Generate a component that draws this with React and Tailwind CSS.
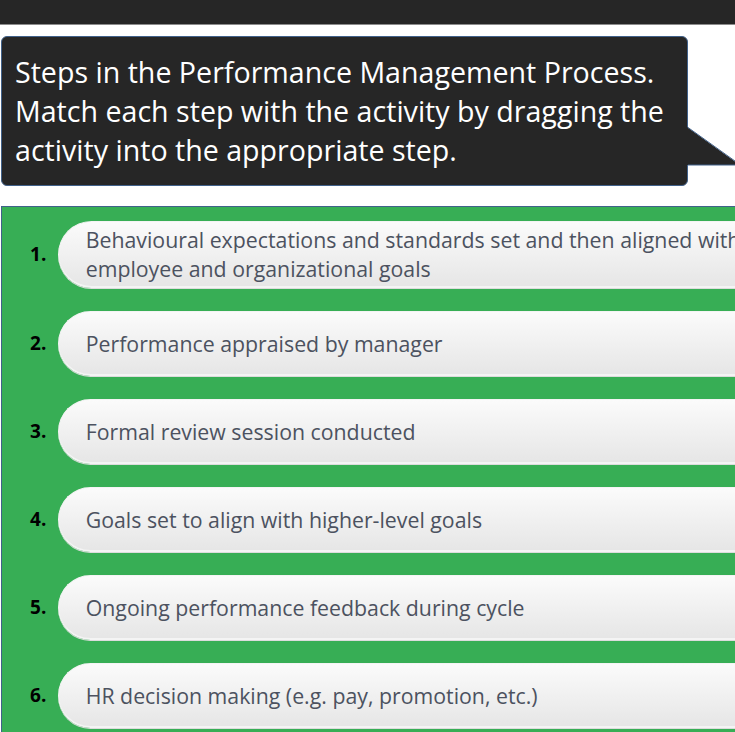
const steps = [
  "Behavioural expectations and standards set and then aligned with employee and organizational goals",
  "Performance appraised by manager",
  "Formal review session conducted",
  "Goals set to align with higher-level goals",
  "Ongoing performance feedback during cycle",
  "HR decision making (e.g. pay, promotion, etc.)",
];

export default function App() {
  return (
    <div className="w-[735px] h-[732px] overflow-hidden bg-white font-['Open_Sans',sans-serif]">
      <div className="h-[25px] bg-[#262626] border-b border-[#8c8c8c]" />

      {/* instructions callout */}
      <div className="pt-[11px] pl-[1px]">
        <div className="relative w-[687px] h-[150px] rounded-md bg-[#262626] border border-[#41618a] px-[13px] pt-[15px] text-white text-[28.6px] leading-[39px]">
          Steps in the Performance Management Process. Match each step with the activity by dragging the activity into the appropriate step.
          <svg className="absolute left-[685px] top-[90px]" width="50" height="40" viewBox="0 0 50 40">
            <polygon points="0,0 50,36 50,38 0,38" fill="#262626" />
            <line x1="1" y1="0.5" x2="50" y2="35.5" stroke="#41618a" strokeWidth="1" />
            <line x1="1" y1="38" x2="50" y2="38" stroke="#41618a" strokeWidth="1" />
          </svg>
        </div>
      </div>

      {/* drop zones */}
      <div className="mt-[20px] ml-[1px] w-[760px] bg-[#37ae55] border-t border-l border-[#41618a] pt-[14px] pb-[20px] flex flex-col gap-[23px]">
        {steps.map((text, i) => (
          <div key={i} className="flex items-center">
            <div className="w-[56px] pl-[28px] text-[19px] font-bold text-black">{i + 1}.</div>
            <div className="w-[710px] min-h-[65px] flex items-center rounded-l-full bg-gradient-to-b from-[#fbfbfb] to-[#e6e6e6] border-t border-l border-b-2 border-[#f4f4f4] shadow-[0_1px_0_#dcdcdc] pl-[27px] pr-[4px] py-[3px] text-[21.3px] leading-[29px] text-[#4c5260]">
              {text}
            </div>
          </div>
        ))}
      </div>
    </div>
  );
}
